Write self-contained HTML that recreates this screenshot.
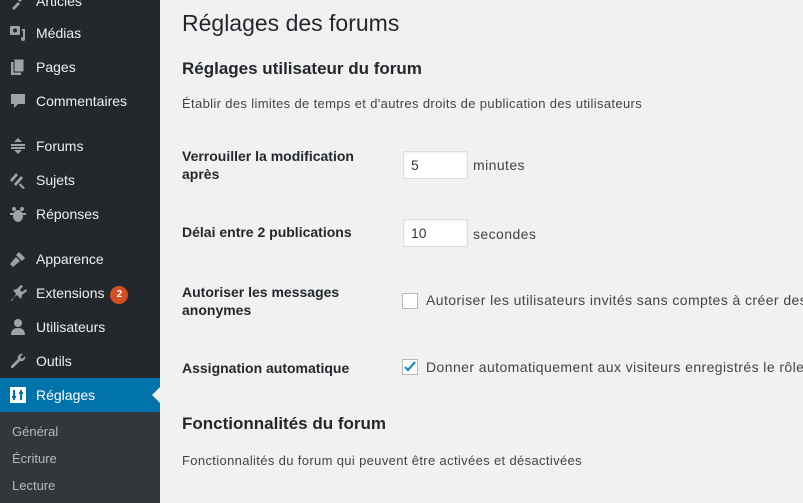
<!DOCTYPE html>
<html><head><meta charset="utf-8"><style>
*{margin:0;padding:0;box-sizing:border-box}
html,body{width:803px;height:503px;overflow:hidden}
body{background:#f1f1f1;font-family:"Liberation Sans",sans-serif;color:#23282d;position:relative}
#sb{position:absolute;left:0;top:0;width:160px;height:503px;background:#23282d}
#main{position:absolute;left:0;top:0;width:803px;height:503px;overflow:hidden}
.mi{position:absolute;left:0;width:160px;height:34px;color:#eee;font-size:14px;line-height:34px;padding-left:36px}
.ic{position:absolute;left:9px;top:8px;width:18px;height:18px;color:#9ea3a8}
.act{background:#0073aa;color:#fff}
.sub{position:absolute;left:0;top:412px;width:160px;height:91px;background:#32373c}
.sub div{position:absolute;left:12px;font-size:13px;color:#b4b9be}
.a{position:absolute;white-space:nowrap}
.lbl{font-weight:bold;font-size:14px;line-height:18px;color:#23282d}
.inp{position:absolute;width:65px;height:28px;background:#fff;border:1px solid #ddd;box-shadow:inset 0 1px 2px rgba(0,0,0,.07);font-size:14px;line-height:26px;padding-left:7px;color:#32373c}
.cb{position:absolute;width:16px;height:16px;background:#fff;border:1px solid #b4b9be}
.t{font-size:14px;color:#444;letter-spacing:0.42px}
.d{font-size:13px;color:#444;letter-spacing:0.35px}
</style></head><body>
<div id="main">
<div class="a" style="left:182px;top:10px;font-size:23px;color:#23282d">Réglages des forums</div>
<div class="a" style="left:182px;top:59px;font-size:17px;font-weight:bold;color:#23282d">Réglages utilisateur du forum</div>
<div class="a d" style="left:182px;top:96px">Établir des limites de temps et d'autres droits de publication des utilisateurs</div>
<div class="a lbl" style="left:182px;top:147px">Verrouiller la modification<br>après</div>
<div class="inp" style="left:403px;top:151px">5</div><div class="a t" style="left:473px;top:157px">minutes</div>
<div class="a lbl" style="left:182px;top:223px">Délai entre 2 publications</div>
<div class="inp" style="left:403px;top:219px">10</div><div class="a t" style="left:473px;top:226px">secondes</div>
<div class="a lbl" style="left:182px;top:283px">Autoriser les messages<br>anonymes</div>
<div class="cb" style="left:402px;top:293px"></div><div class="a t" style="left:426px;top:292px">Autoriser les utilisateurs invités sans comptes à créer des</div>
<div class="a lbl" style="left:182px;top:359px">Assignation automatique</div>
<div class="cb" style="left:402px;top:359px"><svg width="16" height="16" viewBox="0 0 16 16" style="position:absolute;left:-1px;top:-1px"><path d="M3 8l3 3 7-8" stroke="#1e8cbe" stroke-width="2.2" fill="none"/></svg></div><div class="a t" style="left:426px;top:359px">Donner automatiquement aux visiteurs enregistrés le rôle</div>
<div class="a" style="left:182px;top:414px;font-size:17px;font-weight:bold">Fonctionnalités du forum</div>
<div class="a d" style="left:182px;top:453px">Fonctionnalités du forum qui peuvent être activées et désactivées</div>
</div>
<div id="sb">
<div class="mi" style="top:-16px">Articles<svg class="ic" viewBox="0 0 18 18"><path d="M3 16l6-6 2 2-6 6z M9 8l5-5 2 2-5 5z" fill="#9ea3a8"/></svg></div>
<div class="mi" style="top:16px">Médias<svg class="ic" viewBox="0 0 18 18"><rect x="1" y="2" width="10" height="9" rx="1" fill="#9ea3a8"/><circle cx="6" cy="6.5" r="2" fill="#23282d"/><path d="M13 5h3v10a2 2 0 1 1-2-2V7h-1z" fill="#9ea3a8"/></svg></div>
<div class="mi" style="top:50px">Pages<svg class="ic" viewBox="0 0 18 18"><rect x="2" y="4" width="10" height="13" fill="#9ea3a8"/><rect x="5" y="1" width="10" height="13" fill="#9ea3a8" stroke="#23282d"/></svg></div>
<div class="mi" style="top:84px">Commentaires<svg class="ic" viewBox="0 0 18 18"><path d="M2 2h14v10H9l-4 4v-4H2z" fill="#9ea3a8"/></svg></div>
<div class="mi" style="top:129px">Forums<svg class="ic" viewBox="0 0 18 18"><path d="M9 1l4 4H5z M2 7h14v2H2z M2 10h14v2H2z M5 13h8l-4 4z" fill="#9ea3a8"/></svg></div>
<div class="mi" style="top:163px">Sujets<svg class="ic" viewBox="0 0 18 18"><path d="M1 9l6-7 2 2-6 7z M5 13l7-8 2 2-7 8z M11 12l5 5-2 1-4-4z" fill="#9ea3a8"/></svg></div>
<div class="mi" style="top:197px">Réponses<svg class="ic" viewBox="0 0 18 18"><ellipse cx="9" cy="11" rx="5" ry="6" fill="#9ea3a8"/><circle cx="5" cy="4" r="2" fill="#9ea3a8"/><circle cx="13" cy="4" r="2" fill="#9ea3a8"/><rect x="1" y="8" width="16" height="2" fill="#9ea3a8"/></svg></div>
<div class="mi" style="top:242px">Apparence<svg class="ic" viewBox="0 0 18 18"><path d="M10 2l6 6-3 3-6-6z M7 7l4 4-7 6-3-3z" fill="#9ea3a8"/></svg></div>
<div class="mi" style="top:276px">Extensions <span style="display:inline-block;width:18px;height:18px;border-radius:9px;background:#d54e21;color:#fff;font-size:10px;font-weight:bold;line-height:18px;text-align:center;vertical-align:1px;margin-left:2px">2</span><svg class="ic" viewBox="0 0 18 18"><path d="M12 1l2 1-3 4 2 2 4-3 1 2-5 4-1 4-5-5-4 7-1-1 6-5-4-5 4-1z" fill="#9ea3a8"/></svg></div>
<div class="mi" style="top:310px">Utilisateurs<svg class="ic" viewBox="0 0 18 18"><circle cx="9" cy="5" r="4" fill="#9ea3a8"/><path d="M2 17c0-5 3-7 7-7s7 2 7 7z" fill="#9ea3a8"/></svg></div>
<div class="mi" style="top:344px">Outils<svg class="ic" viewBox="0 0 18 18"><path d="M16 4l-3 3-2-2 3-3a4 4 0 0 0-5 5L2 14a1.5 1.5 0 0 0 2 2l7-7a4 4 0 0 0 5-5z" fill="#9ea3a8"/></svg></div>
<div class="mi act" style="top:378px">Réglages<svg class="ic" viewBox="0 0 18 18"><rect x="1" y="1" width="16" height="16" fill="#fff"/><path d="M5 4v10M12 4v10M3 11h4M10 7h4" stroke="#0073aa" stroke-width="2"/></svg><span style="position:absolute;right:0;top:9px;border:8px solid transparent;border-right-color:#f1f1f1"></span></div>
<div class="sub"><div style="top:12px">Général</div><div style="top:39px">Écriture</div><div style="top:66px">Lecture</div></div>
</div>
</body></html>
